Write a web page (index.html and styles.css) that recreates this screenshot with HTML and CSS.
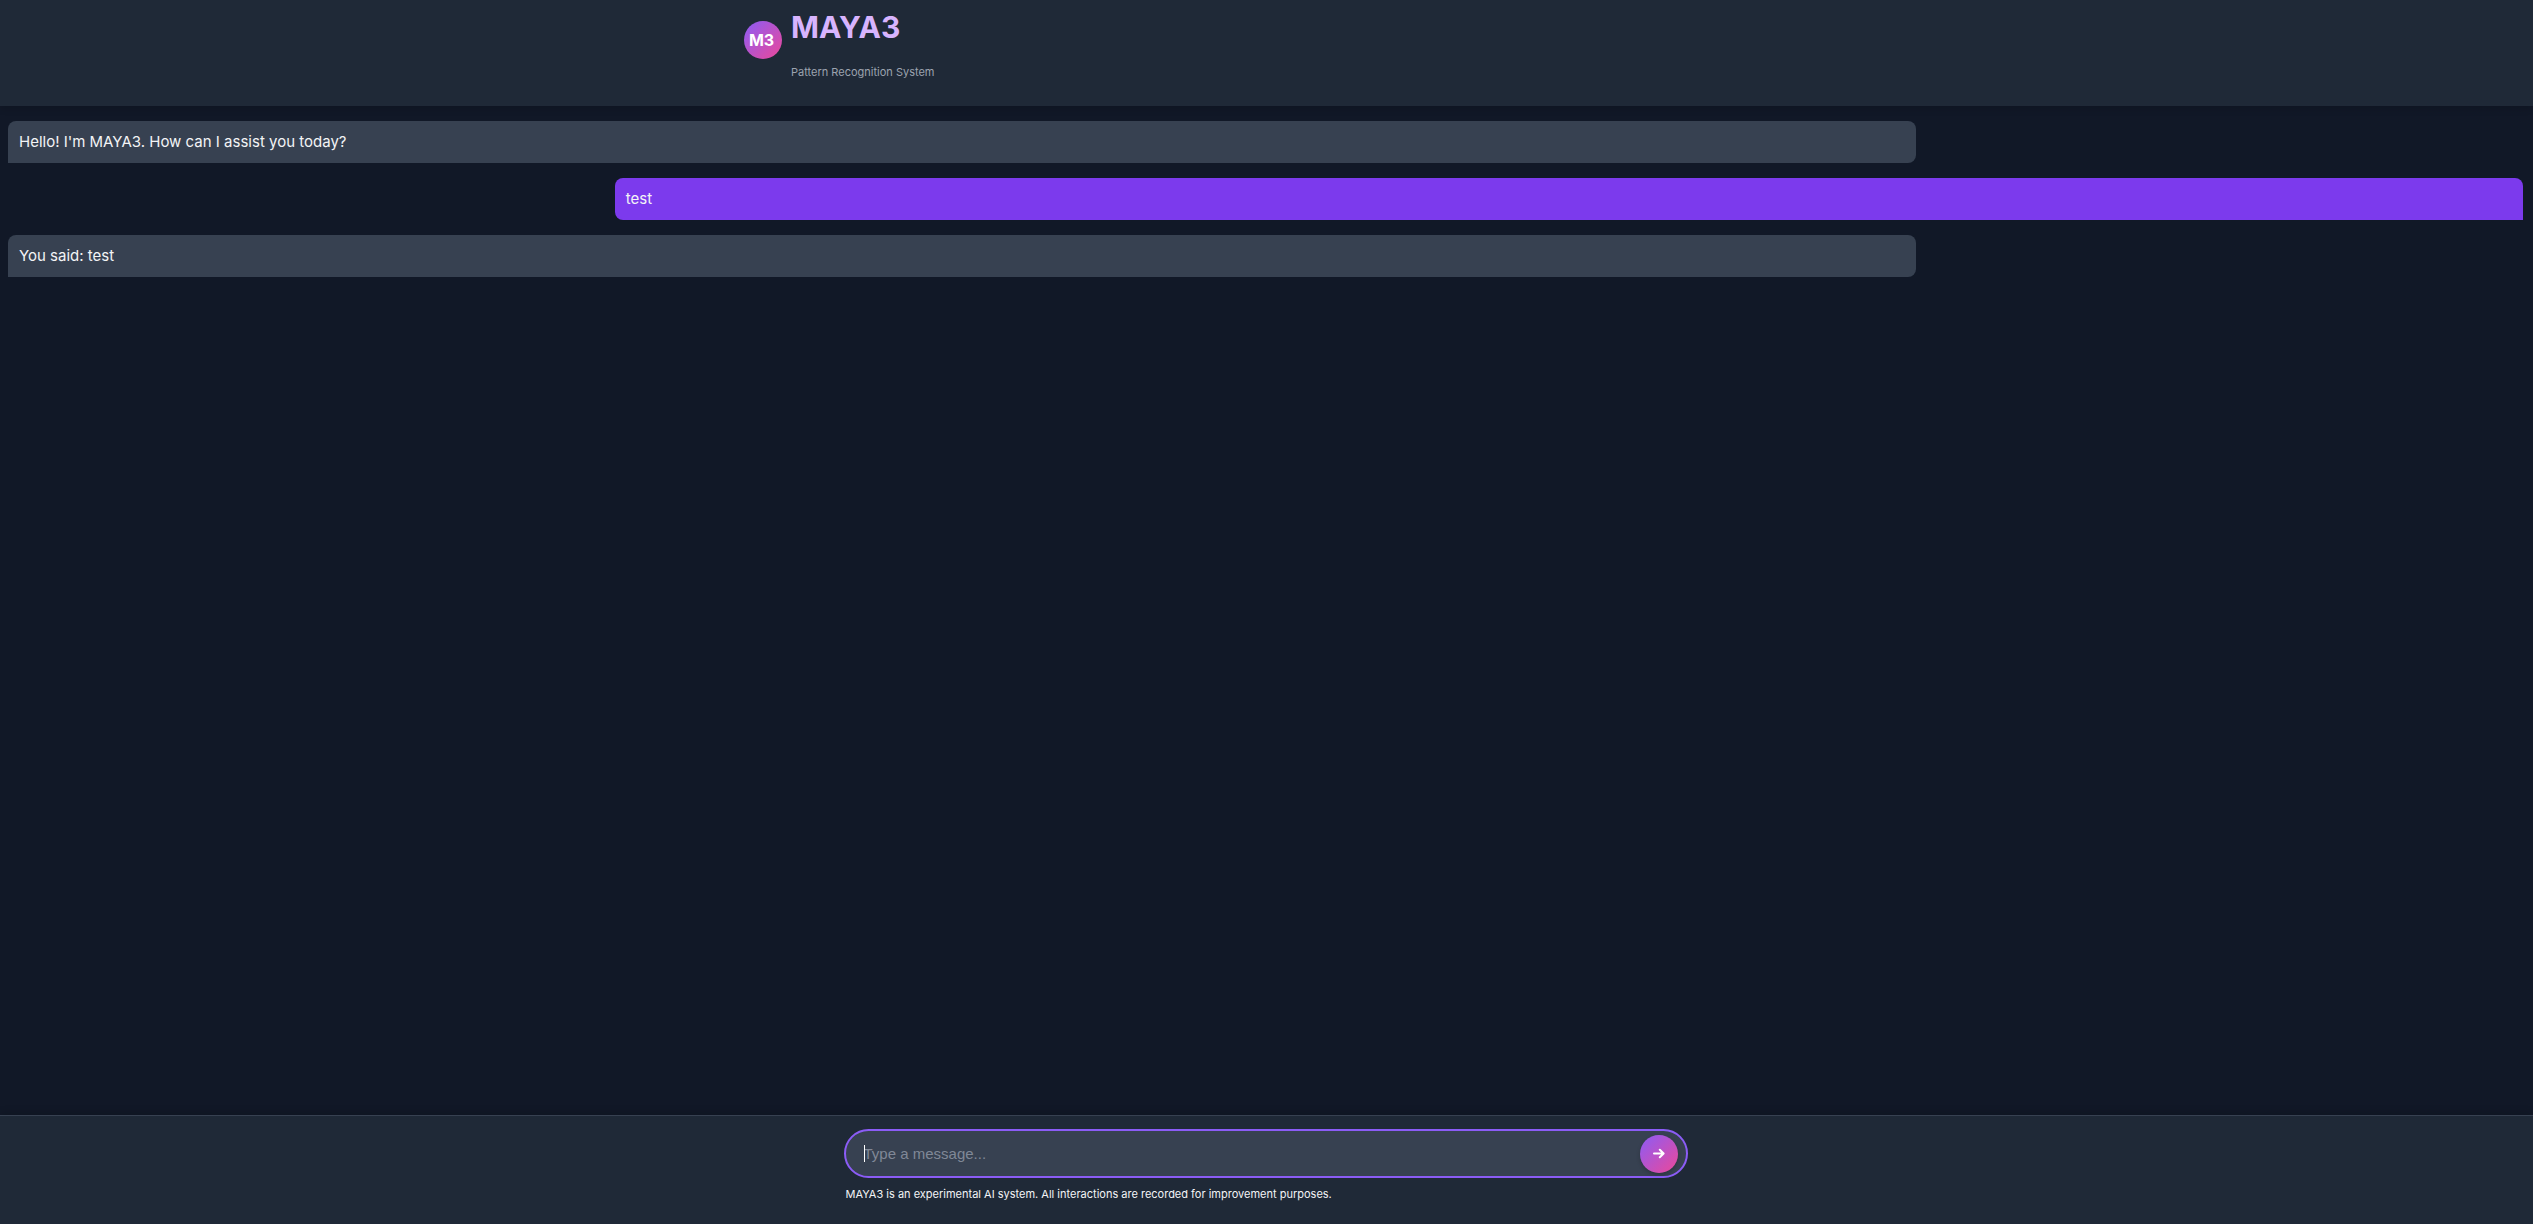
FILE: index.html
```html
<!DOCTYPE html>
<html lang="en">
<head>
  <meta charset="utf-8">
  <meta name="viewport" content="width=device-width, initial-scale=1">
  <title>MAYA3</title>
  <link rel="stylesheet" href="styles.css">
</head>
<body>
  <header class="header">
    <div class="brand">
      <div class="logo">M3</div>
      <div class="brand-text">
        <h1 class="title">MAYA3</h1>
        <p class="subtitle">Pattern Recognition System</p>
      </div>
    </div>
  </header>

  <main class="messages">
    <div class="message bot">Hello! I'm MAYA3. How can I assist you today?</div>
    <div class="message user">test</div>
    <div class="message bot">You said: test</div>
  </main>

  <footer class="footer">
    <form class="composer">
      <div class="field">
        <input class="input" type="text" placeholder="Type a message..." aria-label="Message" autocomplete="off">
        <button class="send" type="button" aria-label="Send">
          <svg class="send-icon" viewBox="0 0 12 12" aria-hidden="true"><path d="M1 5.5H10.4M6.8 1.8L10.6 5.5L6.8 9.2"/></svg>
        </button>
      </div>
      <p class="disclaimer">MAYA3 is an experimental AI system. All interactions are recorded for improvement purposes.</p>
    </form>
  </footer>
</body>
</html>
```

FILE: styles.css
```css
* {
  box-sizing: border-box;
}

body {
  display: flex;
  flex-direction: column;
  min-height: 100vh;
  margin: 0;
  background: #111827;
  color: #f3f4f6;
  font-family: Inter, "Liberation Sans", sans-serif;
  font-size: 15px;
  line-height: 18px;
}

.header {
  padding: 8px 12px 26px;
  background: #1f2937;
  box-shadow: 0 4px 6px rgba(0, 0, 0, 0.1);
}

.brand {
  display: flex;
  align-items: flex-start;
  gap: 9px;
  max-width: 1045px;
  margin: 0 auto;
}

.logo {
  display: flex;
  align-items: center;
  justify-content: center;
  width: 38px;
  height: 38px;
  margin-top: 13px;
  padding-right: 3px;
  border-radius: 50%;
  background: linear-gradient(135deg, #8b5cf6, #ec4899);
  color: #fff;
  font-size: 16px;
  font-weight: 700;
}

.title {
  margin: 0 0 18px;
  color: #d8b4fe;
  font-size: 30px;
  font-weight: 700;
  line-height: 38px;
}

.subtitle {
  margin: 0;
  color: #9ca3af;
  font-size: 11px;
  line-height: 16px;
}

.messages {
  display: flex;
  flex: 1;
  flex-direction: column;
  gap: 15px;
  padding: 15px 10px 15px 8px;
}

.message {
  box-sizing: content-box;
  width: 75%;
  padding: 12px 11px;
  border-radius: 8px;
}

.bot {
  align-self: flex-start;
  border-bottom-left-radius: 0;
  background: #374151;
}

.user {
  align-self: flex-end;
  border-bottom-right-radius: 0;
  background: #7c3aed;
}

.footer {
  padding: 13px 14px 22px 12px;
  border-top: 1px solid #374151;
  background: #1f2937;
  box-shadow: 0 -4px 6px rgba(0, 0, 0, 0.1);
}

.composer {
  max-width: 844px;
  margin: 0 auto;
}

.field {
  position: relative;
  display: flex;
  align-items: center;
  height: 49px;
  padding: 0 8px 0 18px;
  border: 2px solid #8b5cf6;
  border-radius: 25px;
  background: #374151;
}

/* Text cursor of the focused field */
.field::before {
  content: "";
  position: absolute;
  left: 18px;
  width: 1px;
  height: 17px;
  background: #fff;
}

.input {
  flex: 1;
  min-width: 0;
  padding: 0;
  border: 0;
  outline: 0;
  background: transparent;
  color: #fff;
  font-family: "Liberation Sans", Arial, sans-serif;
  font-size: 15px;
}

.input::placeholder {
  color: #808897;
}

.send {
  display: flex;
  align-items: center;
  justify-content: center;
  width: 38px;
  height: 38px;
  padding: 0;
  border: 0;
  border-radius: 50%;
  background: linear-gradient(135deg, #8b5cf6, #ec4899);
  box-shadow: 0 2px 4px rgba(0, 0, 0, 0.2);
  color: #fff;
}

.send-icon {
  width: 12px;
  height: 12px;
  fill: none;
  stroke: currentColor;
  stroke-width: 2;
  stroke-linecap: round;
  stroke-linejoin: round;
}

.disclaimer {
  margin: 8px 0 0;
  padding: 0 2px;
  font-size: 11px;
  line-height: 16px;
}
```
